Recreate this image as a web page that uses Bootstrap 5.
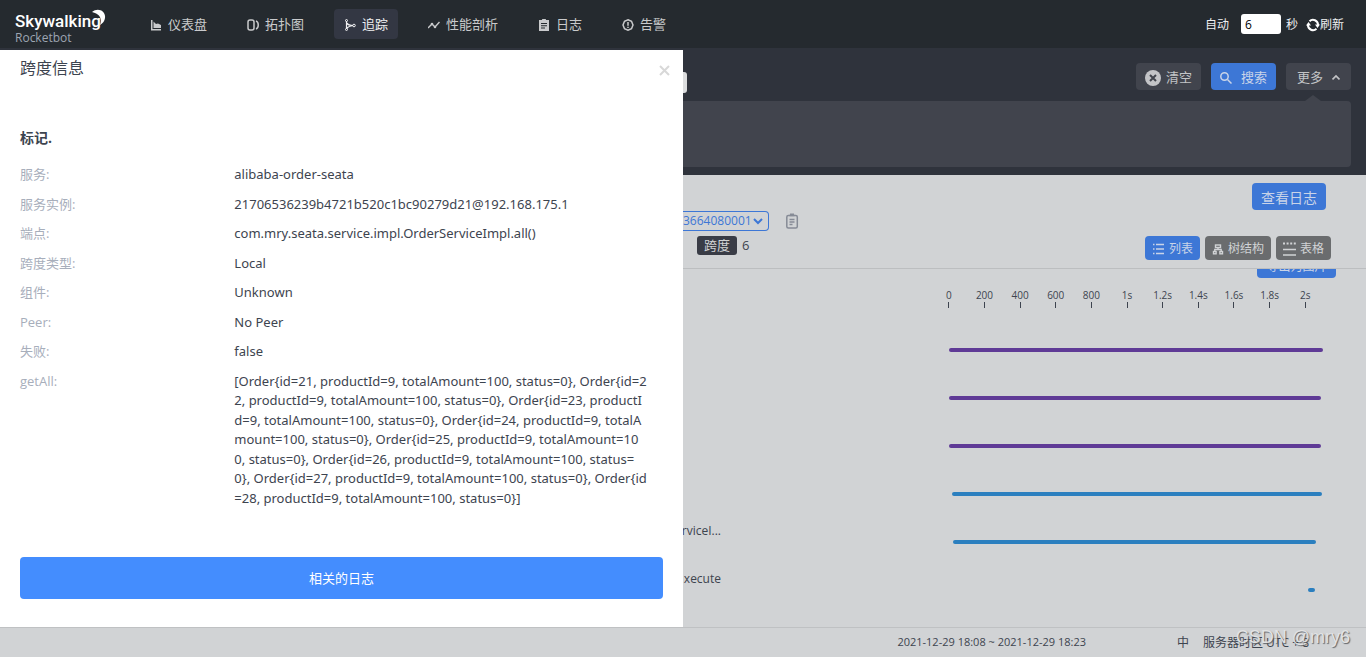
<!DOCTYPE html>
<html lang="zh-CN">
<head>
<meta charset="utf-8">
<meta name="viewport" content="width=device-width, initial-scale=1">
<title>Skywalking Rocketbot</title>
<link href="https://cdn.jsdelivr.net/npm/bootstrap@5.3.0/dist/css/bootstrap.min.css" rel="stylesheet">
<style>
:root { --dark: #2f333c; --shade: #d1d3d5; --blue: #3d77d6; --ink: #3d444f; }
body { font: 13px/1.5 "Open Sans", "Noto Sans CJK SC", sans-serif; color: var(--ink); background: var(--shade); }
svg { display: block; flex: none; }
a { text-decoration: none; }
.topbar { background: #252a2f; border-bottom: 2px solid var(--dark); height: 50px; padding: 0 22px 0 15px; color: #efeff1; }
.brand { width: 125px; color: #fff; padding-top: 8px; }
.brand-name { font: 500 17px/20px Roboto, sans-serif; }
.brand-sub { font-size: 12px; line-height: 14px; color: #9da5b2; }
.moon { position: absolute; left: 76px; top: 6px; }
.menu { gap: 20px; }
.menu .nav-link { display: flex; align-items: center; gap: 6px; padding: 2px 10px 0; height: 30px; border-radius: 4px; color: #c9cacc; }
.menu .nav-link.active { background: #333743; color: #efeff1; }
.reload { font-size: 12px; }
.reload label, .reload span, .reload button { padding-top: 2px; }
.reload input { width: 40px; height: 20px; border: 0; border-radius: 3px; padding: 0 4px; margin: 0 5px 0 12px; font-size: 12px; background: #fff; }
.plain { background: none; border: 0; padding: 0; color: inherit; }
.drawer { background: #fff; padding: 7px 20px 28px; }
.drawer h1 { font-size: 16px; line-height: 22px; margin: 0; font-weight: 400; }
.drawer h2 { font-size: 14px; line-height: 20px; margin: 49px 0 17px; font-weight: 700; }
.drawer .close-x { color: #d8d8d8; padding-top: 8px; margin-right: -7px; align-self: flex-start; }
.tags .row { margin-bottom: 10px; }
.tags dt { font-weight: 400; color: #a7aebb; }
.tags dd { margin: 0; white-space: nowrap; font-family: "Noto Sans", "Noto Sans CJK SC", sans-serif; }
.related { background: #448dfe; color: #fff; height: 42px; font-size: 13px; border-radius: 4px; margin-top: 39px; padding-top: 2px; border: 0; }
.search { background: var(--dark); padding: 13px 15px 8px 0; }
.search .stub { width: 4px; height: 21px; margin-top: 9px; padding: 0; border: 0; border-radius: 0 3px 3px 0; background: #dcddde; }
.tool { width: 65px; height: 27px; border: 0; border-radius: 4px; background: #41444d; color: #c3c4c7; font-size: 13px; padding: 2px 0 0; display: flex; align-items: center; justify-content: center; gap: 5px; }
.tools { gap: 10px; }
.tool.blue, .act.blue { background: var(--blue); color: #c9d4e8; }
.filters { background: #41444d; height: 66px; margin-top: 8px; border-radius: 0 4px 4px 0; }
.filters::before { content: ""; position: absolute; right: 30px; top: -6px; border: solid transparent; border-width: 0 8px 6px; border-bottom-color: #41444d; }
.trace { padding: 8px 35px 8px 0; border-bottom: 1px solid #bcbec0; }
.ids { width: 86px; height: 20px; padding: 0; border: 1px solid var(--blue); border-left: 0; border-radius: 0 4px 4px 0; color: var(--blue); font-size: 12px; line-height: 18px; appearance: none; background: transparent url("data:image/svg+xml,%3Csvg xmlns='http://www.w3.org/2000/svg' viewBox='0 0 10 8'%3E%3Cpath d='M1 2l4 4 4-4' fill='none' stroke='%233d77d6' stroke-width='2'/%3E%3C/svg%3E") no-repeat right 5px center / 10px 8px; }
.act { height: 24px; padding: 1px 7px 0; border: 0; border-radius: 4px; background: #6a6c6e; color: #d1d3d5; font-size: 12px; display: flex; align-items: center; gap: 4px; }
.act.logs { width: 74px; height: 27px; padding: 2px 0 0; font-size: 14px; margin: 0 5px 1px 0; }
.views { gap: 5px; }
.trace-foot { margin-top: 5px; }
.span-tag { background: #393c46; color: #d1d3d5; border-radius: 3px; width: 40px; height: 19px; line-height: 19px; margin: 0 5px 0 14px; }
.peek { height: 9px; padding-right: 30px; }
.peek .act { width: 79px; justify-content: center; flex: none; }
.axis { padding: 10px 43px 0 248px; font-size: 10px; line-height: 14px; }
.axis span::after { content: ""; display: block; width: 1px; height: 6px; background: var(--ink); margin: 0 auto; }
.spans { padding: 20px 43px 30px 0; gap: 24px; }
.span-row { height: 24px; }
.span-name { width: 266px; font-size: 12px; line-height: 22px; }
.span-name span { width: 38px; display: flex; justify-content: flex-end; overflow: hidden; }
.meter { height: 4px; border-radius: 2px; background: #5f3a96; }
.meter.http { background: #2b7fbf; }
.foot { border-top: 1px solid #bfc1c3; height: 30px; padding-right: 57px; font-size: 12px; }
.foot .dates { margin-right: 91px; font-size: 11px; }
.foot .lang { margin-right: 14px; }
.watermark { position: absolute; right: 16px; top: -5px; font: 18px/28px "Liberation Sans", sans-serif; color: #e4e5e6; text-shadow: 1px 1px 1px #55585c; opacity: .9; }
</style>
</head>
<body class="d-flex flex-column min-vh-100">
<header class="topbar d-flex align-items-center">
  <div class="brand position-relative">
    <div class="brand-name">Skywalking</div>
    <div class="brand-sub">Rocketbot</div>
    <svg class="moon" width="15" height="17" viewBox="0 0 15 17"><path d="M1 3C7-2 15 2 14 9c-.3 3-2 5-5 7 2-5 1-11-8-13z" fill="#fff"/></svg>
  </div>
  <nav class="menu d-flex">
    <a class="nav-link" href="#"><svg width="12" height="12" viewBox="0 0 12 12" fill="currentColor"><path d="M1 1h1.500v9H11v1.500H1z"/><path d="M3.500 2.500l2.500 2.500 2-.5 3 1.500v3H3.500z"/></svg>仪表盘</a>
    <a class="nav-link" href="#"><svg width="12" height="12" viewBox="0 0 12 12" fill="none" stroke="currentColor" stroke-width="1.500"><rect x="1" y="1" width="6" height="10" rx="2"/><path d="M9 2c3 1 3 7 0 8"/></svg>拓扑图</a>
    <a class="nav-link active" href="#"><svg width="12" height="12" viewBox="0 0 12 12" fill="none" stroke="currentColor"><path d="M2.500 2v8M3 4c1 3 4 2 6 2.500M3 9.500c1-2 2-2.500 6-3" stroke-width="1.200"/><circle cx="2.500" cy="1.500" r="1"/><circle cx="2.500" cy="10.500" r="1"/><circle cx="10" cy="6.500" r="1.300"/></svg>追踪</a>
    <a class="nav-link" href="#"><svg width="12" height="12" viewBox="0 0 12 12" fill="none" stroke="currentColor" stroke-width="1.400"><path d="M0 9l4-4 3 3 4.500-5"/><circle cx="4" cy="5" r=".6"/><circle cx="7" cy="8" r=".6"/></svg>性能剖析</a>
    <a class="nav-link" href="#"><svg width="12" height="12" viewBox="0 0 12 12" fill="currentColor"><path fill-rule="evenodd" d="M1 1h3a2 1.500 0 0 1 4 0h3v11H1zM3 4v1h6V4zM3 6.300v1h6v-1zM3 8.600v1h4v-1z"/></svg>日志</a>
    <a class="nav-link" href="#"><svg width="12" height="12" viewBox="0 0 12 12" fill="none" stroke="currentColor" stroke-width="1.500"><path d="M6 .8L9.500 2.300 11 6 9.500 9.700 6 11.200 2.500 9.700 1 6l1.500-3.700z"/><path d="M6 3v3.700M6 7.700v1.300"/></svg>告警</a>
  </nav>
  <div class="reload d-flex align-items-center ms-auto">
    <label for="secs">自动</label><input id="secs" type="text" value="6"><span>秒</span>
    <button class="plain d-flex align-items-center ms-2" type="button"><svg width="14" height="14" viewBox="0 0 14 14" fill="none" stroke="#fff" stroke-width="2"><path d="M3.500 3.300A5 5 0 0 1 12 7M10.500 10.700A5 5 0 0 1 2 7"/><path d="M9 6.500h5L11.500 10zM0 7.500h5L2.500 4z" fill="#fff" stroke="none"/></svg>刷新</button>
  </div>
</header>

<main class="d-flex flex-grow-1">
  <section class="drawer w-50 d-flex flex-column">
    <div class="d-flex justify-content-between">
      <h1>跨度信息</h1>
      <button class="plain close-x" type="button" aria-label="关闭"><svg width="11" height="11" viewBox="0 0 11 11" stroke="currentColor" stroke-width="2"><path d="M1 1l9 9M10 1l-9 9"/></svg></button>
    </div>
    <h2>标记.</h2>
    <dl class="tags mb-0">
      <div class="row gx-0"><dt class="col-4">服务:</dt><dd class="col-8">alibaba-order-seata</dd></div>
      <div class="row gx-0"><dt class="col-4">服务实例:</dt><dd class="col-8">21706536239b4721b520c1bc90279d21@192.168.175.1</dd></div>
      <div class="row gx-0"><dt class="col-4">端点:</dt><dd class="col-8">com.mry.seata.service.impl.OrderServiceImpl.all()</dd></div>
      <div class="row gx-0"><dt class="col-4">跨度类型:</dt><dd class="col-8">Local</dd></div>
      <div class="row gx-0"><dt class="col-4">组件:</dt><dd class="col-8">Unknown</dd></div>
      <div class="row gx-0"><dt class="col-4">Peer:</dt><dd class="col-8">No Peer</dd></div>
      <div class="row gx-0"><dt class="col-4">失败:</dt><dd class="col-8">false</dd></div>
      <div class="row gx-0"><dt class="col-4">getAll:</dt><dd class="col-8">[Order{id=21, productId=9, totalAmount=100, status=0}, Order{id=2<br>2, productId=9, totalAmount=100, status=0}, Order{id=23, productI<br>d=9, totalAmount=100, status=0}, Order{id=24, productId=9, totalA<br>mount=100, status=0}, Order{id=25, productId=9, totalAmount=10<br>0, status=0}, Order{id=26, productId=9, totalAmount=100, status=<br>0}, Order{id=27, productId=9, totalAmount=100, status=0}, Order{id<br>=28, productId=9, totalAmount=100, status=0}]</dd></div>
    </dl>
    <button class="related w-100" type="button">相关的日志</button>
  </section>

  <section class="w-50 d-flex flex-column">
    <div class="search">
      <div class="d-flex align-items-start">
        <input class="stub" type="text" aria-label="条件">
        <div class="tools d-flex ms-auto">
          <button class="tool" type="button"><svg width="16" height="16" viewBox="0 0 16 16"><circle cx="8" cy="8" r="8" fill="#c3c4c7"/><path d="M5 5l6 6M11 5l-6 6" stroke="#41444d" stroke-width="2"/></svg>清空</button>
          <button class="tool blue" type="button"><svg class="me-1" width="12" height="12" viewBox="0 0 12 12" fill="none" stroke="currentColor" stroke-width="1.500"><circle cx="4.500" cy="4.500" r="3.700"/><path d="M7.500 7.500L11.500 11.500"/></svg>搜索</button>
          <button class="tool" type="button">更多<svg class="ms-1" width="8" height="8" viewBox="0 0 8 8" fill="none" stroke="currentColor" stroke-width="1.700"><path d="M.5 5.500L4 2l3.500 3.500"/></svg></button>
        </div>
      </div>
      <div class="filters position-relative"></div>
    </div>

    <div class="trace">
      <div class="d-flex justify-content-end"><button class="act blue logs justify-content-center" type="button">查看日志</button></div>
      <div class="d-flex align-items-center">
        <select class="ids" aria-label="追踪 ID"><option>3664080001</option></select>
        <svg class="ms-3" width="14" height="16" viewBox="0 0 14 16" fill="none" stroke="#868b96" stroke-width="1.500"><rect x="1.800" y="2.500" width="10.500" height="12.500" rx="1.500"/><path d="M4.500 2.500h5M4.500 6.500h5M4.500 9h5M4.500 11.500h3"/><path d="M5 1.500h4" stroke-width="2"/></svg>
      </div>
      <div class="trace-foot d-flex align-items-start">
        <span class="span-tag text-center">跨度</span><span>6</span>
        <div class="views d-flex ms-auto">
          <button class="act blue" type="button"><svg width="13" height="12" viewBox="0 0 13 12" stroke="currentColor" stroke-width="1.300"><path d="M1 1.500h1.500M4 1.500h8M1 6h1.500M4 6h8M1 10.500h1.500M4 10.500h8"/></svg>列表</button>
          <button class="act" type="button"><svg width="12" height="12" viewBox="0 0 12 12" fill="none" stroke="currentColor" stroke-width="1.400"><rect x="3.500" y="2" width="5" height="2.500"/><path d="M6 4.500v2M2.800 8.500v-2h6.400v2"/><rect x="1.500" y="8.500" width="2.600" height="2.300"/><rect x="7.900" y="8.500" width="2.600" height="2.300"/></svg>树结构</button>
          <button class="act" type="button"><svg width="13" height="14" viewBox="0 0 13 14" stroke="currentColor" stroke-width="2"><path d="M0 1.500h13" stroke-dasharray="2 1.600"/><path d="M0 7.500h13M0 13h13" stroke-width="1.700"/></svg>表格</button>
        </div>
      </div>
    </div>

    <div class="peek d-flex justify-content-end align-items-end overflow-hidden"><button class="act blue" type="button">导出为图片</button></div>
    <div class="axis d-flex text-center">
      <span class="col">0</span><span class="col">200</span><span class="col">400</span><span class="col">600</span><span class="col">800</span><span class="col">1s</span><span class="col">1.2s</span><span class="col">1.4s</span><span class="col">1.6s</span><span class="col">1.8s</span><span class="col">2s</span>
    </div>
    <div class="spans d-flex flex-column">
      <div class="span-row d-flex"><div class="span-name"></div><div class="flex-grow-1 align-self-end"><div class="meter" style="width:100%"></div></div></div>
      <div class="span-row d-flex"><div class="span-name"></div><div class="flex-grow-1 align-self-end"><div class="meter" style="width:99.5%"></div></div></div>
      <div class="span-row d-flex"><div class="span-name"></div><div class="flex-grow-1 align-self-end"><div class="meter" style="width:99.5%"></div></div></div>
      <div class="span-row d-flex"><div class="span-name"></div><div class="flex-grow-1 align-self-end"><div class="meter http" style="margin-left:0.8%;width:98.9%"></div></div></div>
      <div class="span-row d-flex"><div class="span-name"><span>rviceI...</span></div><div class="flex-grow-1 align-self-end"><div class="meter http" style="margin-left:1%;width:97.2%"></div></div></div>
      <div class="span-row d-flex"><div class="span-name"><span>xecute</span></div><div class="flex-grow-1 align-self-end"><div class="meter http" style="margin-left:96%;width:1.9%"></div></div></div>
    </div>
  </section>
</main>

<footer class="foot d-flex align-items-center justify-content-end position-relative">
  <span class="dates">2021-12-29 18:08 ~ 2021-12-29 18:23</span><span class="lang">中</span><span>服务器时区 UTC + 8</span>
  <span class="watermark">CSDN @mry6</span>
</footer>
<script src="https://cdn.jsdelivr.net/npm/bootstrap@5.3.0/dist/js/bootstrap.bundle.min.js"></script>
</body>
</html>
